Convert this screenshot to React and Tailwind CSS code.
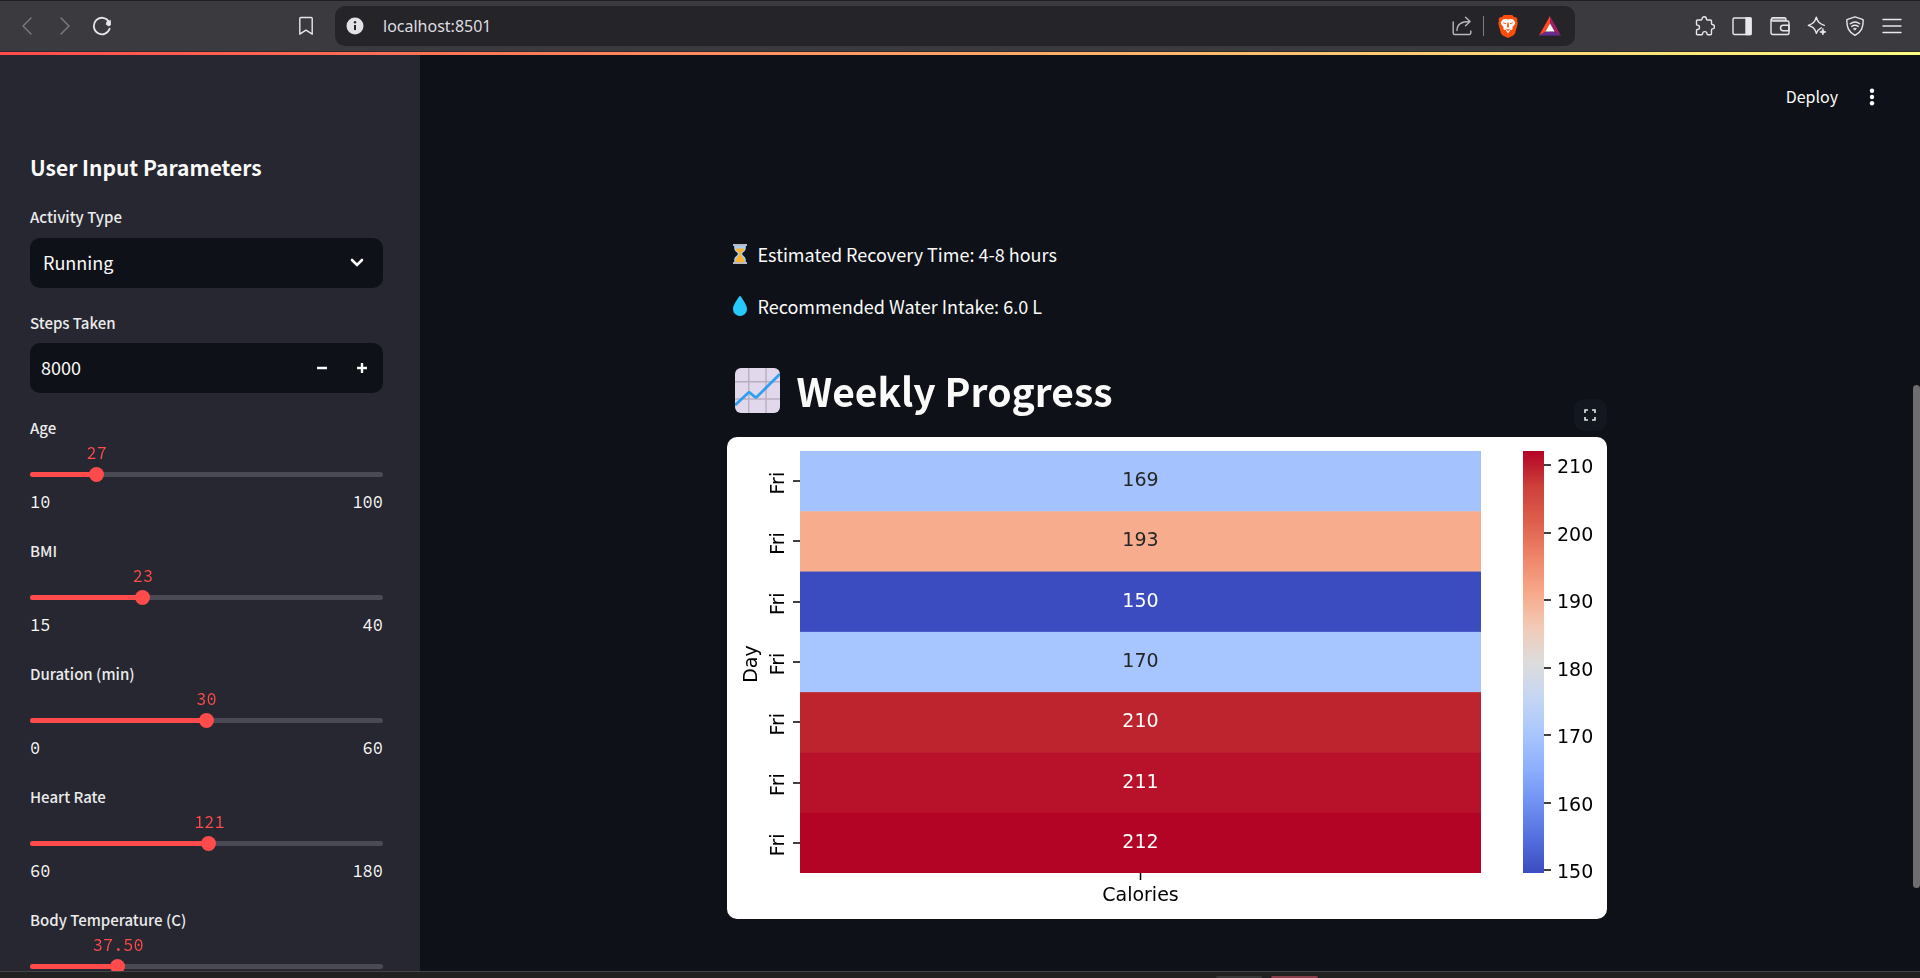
import { useState } from 'react';

const SLIDERS = [
  { id: 'age', label: 'Age', min: 10, max: 100, step: 1, value: 27, digits: 0 },
  { id: 'bmi', label: 'BMI', min: 15, max: 40, step: 1, value: 23, digits: 0 },
  { id: 'duration', label: 'Duration (min)', min: 0, max: 60, step: 1, value: 30, digits: 0 },
  { id: 'heart', label: 'Heart Rate', min: 60, max: 180, step: 1, value: 121, digits: 0 },
  { id: 'temp', label: 'Body Temperature (C)', min: 36, max: 42, step: 0.1, value: 37.5, digits: 2 },
];

const DAYS = [
  { day: 'Fri', calories: 169, fill: '#a3c2fe', ink: '#262626' },
  { day: 'Fri', calories: 193, fill: '#f7ac8e', ink: '#262626' },
  { day: 'Fri', calories: 150, fill: '#3b4cc0', ink: '#ffffff' },
  { day: 'Fri', calories: 170, fill: '#a7c5fe', ink: '#262626' },
  { day: 'Fri', calories: 210, fill: '#be242e', ink: '#ffffff' },
  { day: 'Fri', calories: 211, fill: '#b8122a', ink: '#ffffff' },
  { day: 'Fri', calories: 212, fill: '#b40426', ink: '#ffffff' },
];

const SCALE_STOPS = [
  '#b40426', '#cc403a', '#dd5f4b', '#ee8468', '#f7a889', '#f2cab5', '#dddcdc',
  '#c5d6f2', '#aac7fd', '#8db0fe', '#6f92f3', '#5470de', '#3b4cc0',
];

const LABEL = 'block text-[15px] font-medium leading-6 text-[#ebebec]';
const MONO = "font-['Source_Code_Pro','DejaVu_Sans_Mono',monospace] text-[17px] leading-5";

function Glyph({ children, width = 20, height = 20, className = '' }) {
  return (
    <svg
      width={width}
      height={height}
      viewBox={`0 0 ${width} ${height}`}
      fill="none"
      stroke="currentColor"
      strokeWidth="1.4"
      strokeLinecap="round"
      strokeLinejoin="round"
      className={`block shrink-0 ${className}`}
      aria-hidden="true"
    >
      {children}
    </svg>
  );
}

function BrowserBar() {
  return (
    <header className="flex h-[52px] shrink-0 items-center border-b border-t border-b-[#2b2a2e] border-t-[#1f1e22] bg-[#3b3a3e] pl-[17px] pr-[18px] text-[#e8e7eb]">
      <div className="flex w-[318px] shrink-0 items-center">
        <button type="button" aria-label="Back" className="mr-[18px] text-[#7d7c80]">
          <Glyph><path d="M14 2 6 10l8 8" /></Glyph>
        </button>
        <button type="button" aria-label="Forward" className="mr-[17px] text-[#7d7c80]">
          <Glyph><path d="M6 2l8 8-8 8" /></Glyph>
        </button>
        <button type="button" aria-label="Reload">
          <Glyph>
            <path d="M17.600 12.800A8.100 8.300 0 1 1 16.800 5.600" strokeWidth="1.800" />
            <path d="M18.500 4.800v4.200l-1.500 1-2.800-1.600.6-2.400z" fill="currentColor" strokeWidth="0.800" />
          </Glyph>
        </button>
        <button type="button" aria-label="Bookmark this page" className="ml-auto mr-[19px]">
          <Glyph>
            <path d="M4.800 1.500h10.400a1 1 0 0 1 1 1V18.200L10 14.200 3.800 18.200V2.500a1 1 0 0 1 1-1z" />
          </Glyph>
        </button>
      </div>
      <div className="flex h-10 min-w-0 flex-1 items-center rounded-[10px] bg-[#252428] pl-[11px] pr-[13px]">
        <svg width="18" height="18" viewBox="0 0 18 18" className="shrink-0" aria-hidden="true">
          <circle cx="9" cy="9" r="8.500" fill="#e2e1e6" />
          <path d="M9 8v5" stroke="#252428" strokeWidth="2" />
          <circle cx="9" cy="5.300" r="1.200" fill="#252428" />
        </svg>
        <input
          aria-label="Address"
          defaultValue="localhost:8501"
          className="ml-[19px] min-w-0 flex-1 bg-transparent font-['Noto_Sans',sans-serif] text-[16px] leading-6 text-[#dedde1] outline-none"
        />
        <button type="button" aria-label="Share" className="text-[#b9b8bc]">
          <Glyph>
            <path d="M1.200 6v11a1.500 1.500 0 0 0 1.500 1.500h14.600a1.500 1.500 0 0 0 1.500-1.500v-2" />
            <path d="M5 14.500C5 8.500 9 5.500 17.500 5.500M13.500 1.200l4.600 4.300-4.600 4.300" />
          </Glyph>
        </button>
        <span className="mx-[11px] h-5 w-px bg-[#7d7c80]" />
        <button type="button" aria-label="Brave Shields" className="ml-[3px]">
          <svg width="20" height="23" viewBox="0 0 20 23" aria-hidden="true">
            <path d="M5.800 0h8.400l2 2.200 1.600-.2 1.700 2.200-.5 1.800.8 2.300-2.500 9.200c-.4 1.500-1 2.100-2.100 2.900L10 23l-5.200-2.600c-1.100-.8-1.700-1.400-2.100-2.900L.2 8.300 1 6 .5 4.200 2.200 2l1.600.2z" fill="#fb4d0c" />
            <path d="M10 4.600 12.300 4l2.700.3 2.300 3.200-.7 2-2.200 2.600.3 1.700-1.300 1.300-1-.3L10 18.600 7.600 14.800l-1 .3-1.300-1.300.3-1.700L3.400 9.500l-.7-2L5 4.300 7.700 4z" fill="#fff" />
            <path d="M4.800 7.200 8.300 8.200 7.800 9 5.600 8.600zM15.200 7.200l-3.500 1 .5.800 2.200-.4zM9.400 7.500h1.200l.4 4.200-1 1-1-1z" fill="#fb4d0c" />
            <path d="M7.300 13.200 10 14.600l2.700-1.400-2.700 3z" fill="#fb4d0c" />
          </svg>
        </button>
        <button type="button" aria-label="Brave Rewards" className="ml-[20px]">
          <svg width="24" height="22" viewBox="0 0 24 22" aria-hidden="true">
            <path d="M12 1 1 20.500l7-4L12 9z" fill="#ff4724" />
            <path d="M12 1v8l4 7.500 7 4z" fill="#9e1f63" />
            <path d="M1 20.500h22l-7-4H8z" fill="#662d91" />
            <path d="M12 8.500 7.500 16.500h9z" fill="#fff" />
          </svg>
        </button>
      </div>
      <div className="ml-[120px] flex w-[207px] shrink-0 items-center justify-between">
        <button type="button" aria-label="Extensions">
          <Glyph>
            <path d="M1.500 5Q1.500 4 2.500 4H6Q7 4 7 3A2.200 2.200 0 0 1 11.400 3Q11.400 4 12.400 4H15.500Q16.500 4 16.500 5V7.500Q16.500 8.500 17.300 8.500A2.200 2.200 0 0 1 17.300 12.900Q16.500 12.900 16.500 13.900V17.800Q16.500 18.800 15.500 18.800H13Q12 18.800 12 17.800A2.200 2.200 0 0 0 7.600 17.800Q7.600 18.800 6.600 18.800H2.500Q1.500 18.800 1.500 17.800V14.400Q1.500 13.500 2.300 13.500A2.200 2.200 0 0 0 2.300 9.100Q1.500 9.100 1.500 8.200Z" />
          </Glyph>
        </button>
        <button type="button" aria-label="Sidebar">
          <Glyph>
            <rect x="1" y="2" width="18" height="16.500" rx="1.500" />
            <path d="M14 2H19v16.500h-5z" fill="currentColor" />
          </Glyph>
        </button>
        <button type="button" aria-label="Wallet">
          <Glyph>
            <path d="M3 1.800h11.500A1.500 1.500 0 0 1 16 3.300V5H3a1.500 1.500 0 0 1 0-3.200z" fill="#8f8e92" stroke="none" />
            <path d="M1 3.500v13a2 2 0 0 0 2 2h14.500a1.500 1.500 0 0 0 1.500-1.500V6.500A1.500 1.500 0 0 0 17.500 5H3a1.600 1.600 0 0 1 0-3.200h11.500A1.500 1.500 0 0 1 16 3.300V5" />
            <path d="M19 9.300h-5.800a2.700 2.700 0 0 0 0 5.400H19z" />
          </Glyph>
        </button>
        <button type="button" aria-label="Assistant">
          <Glyph>
            <path d="M14.200 11.800c-2.700 1.300-3.700 2.400-4.900 5.600-1.500-4.900-3.200-6.600-8-8.100 4.800-1.500 6.500-3.200 8-8.100 1.500 4.900 3.200 6.600 8 8.100" />
            <path d="M15.900 12.800c.5 2.100 1 2.600 3.100 3.100-2.100.5-2.600 1-3.100 3.100-.5-2.100-1-2.600-3.100-3.100 2.100-.5 2.600-1 3.100-3.100z" fill="currentColor" strokeWidth="0.800" />
          </Glyph>
        </button>
        <button type="button" aria-label="VPN">
          <Glyph>
            <path d="M10 .900 17.500 3.300a1 1 0 0 1 .7 1c0 7-1.500 11.500-8.200 15-6.700-3.500-8.200-8-8.200-15a1 1 0 0 1 .7-1z" />
            <path d="M5.300 7.800c3-2.200 6.400-2.200 9.400 0M6.800 10.400c2-1.500 4.400-1.500 6.400 0" />
            <path d="M8.600 12.600a2.500 2.500 0 0 1 2.800 0L10 14z" fill="currentColor" strokeWidth="0.800" />
          </Glyph>
        </button>
        <button type="button" aria-label="Menu">
          <Glyph><path d="M1 3.500h18M1 10h18M1 16.500h18" /></Glyph>
        </button>
      </div>
    </header>
  );
}

function SliderField({ id, label, min, max, step, value: initial, digits }) {
  const [value, setValue] = useState(initial);
  const pct = ((value - min) / (max - min)) * 100;
  return (
    <div className="mb-[27px]">
      <label htmlFor={id} className={LABEL}>{label}</label>
      <div className="mt-[3px] h-5">
        <output
          htmlFor={id}
          className={`${MONO} relative block w-max -translate-x-1/2 text-[#ff4b4b]`}
          style={{ left: `${pct}%` }}
        >
          {value.toFixed(digits)}
        </output>
      </div>
      <div className="relative mt-1 flex h-[15px] items-center">
        <span className="absolute inset-x-0 top-[5px] h-[5px] overflow-hidden rounded-full bg-[#494a54]">
          <span className="block h-full bg-[#ff4b4b]" style={{ width: `${pct}%` }} />
        </span>
        <input
          id={id}
          type="range"
          min={min}
          max={max}
          step={step}
          value={value}
          onChange={(e) => setValue(Number(e.target.value))}
          className="relative -ml-2 h-[15px] w-[calc(100%+15px)] shrink-0 cursor-pointer appearance-none bg-transparent outline-none [&::-webkit-slider-thumb]:size-[15px] [&::-webkit-slider-thumb]:appearance-none [&::-webkit-slider-thumb]:rounded-full [&::-webkit-slider-thumb]:bg-[#ff4b4b]"
        />
      </div>
      <div className={`${MONO} mt-[10px] flex justify-between text-[#fafafa]`}>
        <span>{min}</span>
        <span>{max}</span>
      </div>
    </div>
  );
}

function Sidebar() {
  const [steps, setSteps] = useState(8000);
  return (
    <aside className="w-[420px] shrink-0 overflow-x-hidden overflow-y-auto bg-[#262730] pl-[30px] pr-[37px] pt-24 [scrollbar-width:none]">
      <h2 className="mb-[22px] text-[21px] font-bold leading-8 text-[#fafafa]">User Input Parameters</h2>

      <div className="mb-[23px]">
        <label htmlFor="activity" className={LABEL}>Activity Type</label>
        <div className="relative mt-[9px]">
          <select
            id="activity"
            defaultValue="Running"
            className="block h-[50px] w-full appearance-none rounded-[10px] bg-[#0e1117] px-[13px] pb-0.5 text-[18px] text-[#fafafa] outline-none"
          >
            <option>Running</option>
          </select>
          <svg width="14" height="10" viewBox="0 0 14 10" fill="none" className="pointer-events-none absolute right-[19px] top-5" aria-hidden="true">
            <path d="M2 2l5 5 5-5" stroke="#fafafa" strokeWidth="2.600" strokeLinecap="round" />
          </svg>
        </div>
      </div>

      <div className="mb-[23px]">
        <label htmlFor="steps" className={LABEL}>Steps Taken</label>
        <div className="mt-2 flex h-[50px] overflow-hidden rounded-[10px] bg-[#0e1117] pr-px text-[#fafafa]">
          <input
            id="steps"
            inputMode="numeric"
            value={steps}
            onChange={(e) => setSteps(Number(e.target.value) || 0)}
            className="min-w-0 flex-1 bg-transparent px-[11px] pb-0.5 text-[18px] outline-none"
          />
          <button type="button" aria-label="Decrease steps" onClick={() => setSteps(steps - 1)} className="grid w-10 place-items-center">
            <svg width="10" height="10" viewBox="0 0 10 10" aria-hidden="true">
              <path d="M0 5h10" stroke="currentColor" strokeWidth="2.400" />
            </svg>
          </button>
          <button type="button" aria-label="Increase steps" onClick={() => setSteps(steps + 1)} className="grid w-10 place-items-center">
            <svg width="10" height="10" viewBox="0 0 10 10" aria-hidden="true">
              <path d="M0 5h10M5 0v10" stroke="currentColor" strokeWidth="2.400" />
            </svg>
          </button>
        </div>
      </div>

      {SLIDERS.map((s) => <SliderField key={s.id} {...s} />)}
    </aside>
  );
}

function Heatmap() {
  const top = 14;
  const height = 422;
  const row = height / DAYS.length;
  const ticks = [210, 200, 190, 180, 170, 160, 150];
  return (
    <svg
      viewBox="0 0 880 482"
      role="img"
      aria-label="Calories per day"
      className="block h-auto w-full rounded-[10px] bg-white font-['DejaVu_Sans',sans-serif] text-[19px]"
    >
      <defs>
        <linearGradient id="scale" x1="0" y1="0" x2="0" y2="1">
          {SCALE_STOPS.map((c, i) => (
            <stop key={c} offset={i / (SCALE_STOPS.length - 1)} stopColor={c} />
          ))}
        </linearGradient>
      </defs>
      {DAYS.map((d, i) => {
        const y = top + i * row;
        const mid = y + row / 2;
        return (
          <g key={d.calories}>
            <rect x="73" y={y} width="681" height={row + (i < DAYS.length - 1 ? 0.5 : 0)} fill={d.fill} />
            <path d={`M66 ${Math.round(mid)}h7`} stroke="#000" strokeWidth="1.500" />
            <text transform={`translate(57 ${mid + 2}) rotate(-90)`} textAnchor="middle">{d.day}</text>
            <text x="413.500" y={mid + 5} textAnchor="middle" fill={d.ink}>{d.calories}</text>
          </g>
        );
      })}
      <path d="M413.500 436v7" stroke="#000" strokeWidth="1.500" />
      <text x="413.500" y="464" textAnchor="middle">Calories</text>
      <text transform="translate(30 227) rotate(-90)" textAnchor="middle">Day</text>
      <rect x="796" y={top} width="21" height={height} fill="url(#scale)" />
      {ticks.map((t) => {
        const y = Math.round(28 + (210 - t) * 6.75);
        return (
          <g key={t}>
            <path d={`M817 ${y}h7`} stroke="#000" strokeWidth="1.500" />
            <text x="830" y={y + 8}>{t}</text>
          </g>
        );
      })}
    </svg>
  );
}

function Main() {
  return (
    <main className="flex min-w-0 flex-1">
      <div className="min-w-0 flex-1">
        <div className="flex h-[84px] items-center justify-end gap-[27px] pr-[34px]">
          <button type="button" className="pb-0.5 text-[16px] leading-6">Deploy</button>
          <button type="button" aria-label="More options" className="py-1">
            <svg width="14" height="20" viewBox="0 0 14 20" fill="currentColor" aria-hidden="true">
              <circle cx="7" cy="3.800" r="2.200" />
              <circle cx="7" cy="10" r="2.200" />
              <circle cx="7" cy="16.200" r="2.200" />
            </svg>
          </button>
        </div>
        <div className="mx-auto max-w-[880px] pt-[101px]">
          <p className="flex items-center gap-[11px] pl-1.5 text-[18px] leading-7">
            <svg width="14" height="20" viewBox="0 0 14 20" aria-hidden="true">
              <path d="M1.200 1.500h11.600v2.800c0 3-3.600 4.200-3.600 5.700s3.600 2.700 3.600 5.700v2.800H1.200v-2.800c0-3 3.600-4.200 3.600-5.700S1.200 7.300 1.200 4.300z" fill="#a9cdf0" />
              <path d="M2.500 4.500h9c0 2.500-3.700 3.500-3.700 5.500 0 2.200 2.700 3 3.700 6.500v1.500h-9v-1.500c1-3.500 3.700-4.300 3.700-6.500 0-2-3.700-3-3.700-5.500z" fill="#ffb02e" />
              <path d="M0 0h14v2H0zM0 18h14v2H0z" fill="#b9b9c4" />
            </svg>
            Estimated Recovery Time: 4-8 hours
          </p>
          <p className="mt-6 flex items-center gap-[11px] pl-1.5 text-[18px] leading-7">
            <svg width="14" height="20" viewBox="0 0 14 20" aria-hidden="true">
              <path d="M6.200.500a1 1 0 0 1 1.600 0C10 3.800 14 9.300 14 13a7 7 0 0 1-14 0C0 9.300 4 3.800 6.200.500z" fill="#26c9fc" />
            </svg>
            Recommended Water Intake: 6.0 L
          </p>
          <h1 className="mt-[46px] flex items-center gap-[17px] pl-2 text-[39px] font-bold leading-[48px]">
            <svg width="45" height="45" viewBox="0 0 45 45" fill="none" aria-hidden="true">
              <rect width="45" height="45" rx="6" fill="#e1d8ec" />
              <path d="M13.800 0v45M31 0v45M0 13.800h45M0 31h45" stroke="#b8aec4" strokeWidth="1.400" />
              <path d="M0 37.300 12.800 25.200a2 2 0 0 1 2.700 0l4 3.400a2 2 0 0 0 2.700 0L45 6" stroke="#2f9fee" strokeWidth="2.800" />
            </svg>
            Weekly Progress
          </h1>
          <figure className="relative mt-[23px]">
            <button
              type="button"
              aria-label="View fullscreen"
              className="absolute -top-[38px] right-0 grid h-8 w-[33px] place-items-center rounded-[10px] bg-[#131820]"
            >
              <svg width="12" height="12" viewBox="0 0 12 12" fill="none" stroke="#e6e6e8" strokeWidth="1.600" aria-hidden="true">
                <path d="M1 4V1h3M8 1H11v3M11 8V11H8M4 11H1V8" />
              </svg>
            </button>
            <Heatmap />
          </figure>
        </div>
      </div>
      <div className="flex w-[7px] shrink-0 flex-col">
        <div className="flex-[330]" />
        <div className="flex-[503] rounded-full bg-[#6e6e72]" />
        <div className="flex-[83]" />
      </div>
    </main>
  );
}

export default function App() {
  return (
    <div className="flex h-screen flex-col overflow-hidden bg-[#0e1117] font-['Noto_Sans_CJK_SC',sans-serif] text-[#fafafa]">
      <BrowserBar />
      <div className="h-[3px] shrink-0 bg-linear-to-r/srgb from-[#ff4b4b] to-[#fffd80]" />
      <div className="flex min-h-0 flex-1">
        <Sidebar />
        <Main />
      </div>
      <footer className="flex h-[7px] shrink-0 items-end gap-[9px] border-t border-[#444446] bg-[#222122] pl-[1216px]">
        <span className="h-0.5 w-[46px] rounded-t-[3px] bg-[#3a393a]" />
        <span className="h-0.5 w-[47px] rounded-t-[3px] bg-[#8a3f4c]" />
      </footer>
    </div>
  );
}
